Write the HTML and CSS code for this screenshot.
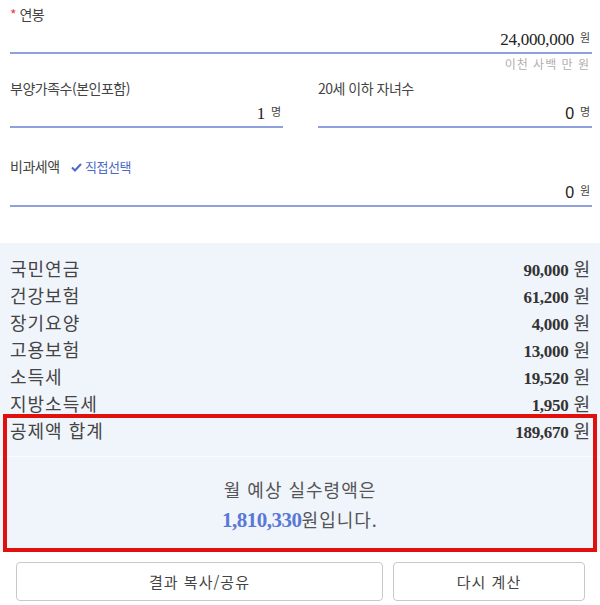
FILE: index.html
```html
<!DOCTYPE html>
<html lang="ko">
<head>
    <meta charset="UTF-8">
    <meta name="viewport" content="width=device-width, initial-scale=1.0">
    <title>연봉 실수령액 계산기</title>
    <link rel="stylesheet" href="styles.css">
</head>
<body>
    <div class="form">
        <!-- 연봉 입력 -->
        <div class="field">
            <div class="label"><span class="req">*</span> 연봉</div>
            <div class="input"><span class="num">24,000,000</span><span class="unit">원</span></div>
            <div class="hint">이천 사백 만 원</div>
        </div>

        <div class="field-row">
            <div class="field">
                <div class="label">부양가족수(본인포함)</div>
                <div class="input"><span class="num">1</span><span class="unit">명</span></div>
            </div>
            <div class="field">
                <div class="label">20세 이하 자녀수</div>
                <div class="input"><span class="num sans">0</span><span class="unit">명</span></div>
            </div>
        </div>

        <div class="field field-tax">
            <div class="label">비과세액
                <span class="pick">
                    <svg width="11" height="9" viewBox="0 0 11 9"><path d="M1 4.5 L4 7.5 L10 1" fill="none" stroke="#4b69c6" stroke-width="2"/></svg>
                    직접선택
                </span>
            </div>
            <div class="input"><span class="num sans">0</span><span class="unit">원</span></div>
        </div>
    </div>

    <!-- 공제 내역 -->
    <div class="result">
        <div class="rows">
            <div class="row"><span class="name">국민연금</span><span><b>90,000</b> 원</span></div>
            <div class="row"><span class="name">건강보험</span><span><b>61,200</b> 원</span></div>
            <div class="row"><span class="name">장기요양</span><span><b>4,000</b> 원</span></div>
            <div class="row"><span class="name">고용보험</span><span><b>13,000</b> 원</span></div>
            <div class="row"><span class="name">소득세</span><span><b>19,520</b> 원</span></div>
            <div class="row"><span class="name">지방소득세</span><span><b>1,950</b> 원</span></div>
        </div>
        <div class="summary">
            <div class="row total"><span class="name">공제액 합계</span><span><b>189,670</b> 원</span></div>
            <div class="net">
                <p>월 예상 실수령액은</p>
                <p><b class="net-num">1,810,330</b>원입니다.</p>
            </div>
        </div>
    </div>

    <div class="buttons">
        <button>결과 복사/공유</button>
        <button>다시 계산</button>
    </div>
</body>
</html>
```

FILE: styles.css
```css
body {
    margin: 0;
    width: 600px;
    font-family: "Noto Sans CJK KR", "Noto Sans", sans-serif;
    color: #444;
    background: #fff;
}
.form {
    padding: 4px 8px 0 10px;
}
.label {
    font-size: 14px;
    line-height: 20px;
    color: #444;
    letter-spacing: -0.5px;
}
.req {
    color: #e4473f;
}
.input {
    height: 28px;
    line-height: 26px;
    border-bottom: 2px solid #8fa1dd;
    text-align: right;
    padding-right: 2px;
}
.num {
    font-family: "Liberation Serif", serif;
    font-size: 17px;
    letter-spacing: -0.3px;
    color: #222;
}
.num.sans {
    font-family: "Liberation Sans", sans-serif;
    font-size: 16px;
}
.unit {
    font-size: 11px;
    margin-left: 6px;
    vertical-align: 3px;
}
.hint {
    font-size: 12px;
    line-height: 20px;
    text-align: right;
    color: #b0b0b0;
    letter-spacing: 1px;
    padding-right: 2px;
}
.field-row {
    display: grid;
    grid-template-columns: 273px 274px;
    gap: 35px;
    margin-top: 4px;
}
.field-tax {
    margin-top: 28px;
}
.pick {
    font-size: 13px;
    color: #4b69c6;
    margin-left: 8px;
}
.result {
    margin-top: 36px;
    background: #f0f4fb;
    padding-top: 12px;
}
.row {
    display: flex;
    justify-content: space-between;
    align-items: center;
    height: 27px;
    padding: 0 10px;
    font-size: 18px;
    line-height: 27px;
    color: #444;
}
.row span {
    height: 27px;
}
.row .name {
    letter-spacing: 1px;
}
.row b {
    font-family: "Liberation Serif", serif;
    font-size: 17px;
    color: #333;
    letter-spacing: -0.3px;
}
.summary {
    position: relative;
}
.summary::after {
    content: "";
    position: absolute;
    top: -3px;
    left: 3px;
    right: 3px;
    bottom: 0;
    border: 4px solid #e0100f;
}
.total {
    padding-bottom: 12px;
    border-bottom: 1px solid #f8faff;
}
.net {
    padding: 17px 0 18px;
    text-align: center;
    font-size: 18px;
    line-height: 30px;
    color: #555;
}
.net p {
    margin: 0;
    height: 30px;
    letter-spacing: 1px;
}
.net-num {
    font-family: "Liberation Serif", serif;
    font-size: 21px;
    color: #5a78d6;
    letter-spacing: -0.5px;
}
.buttons {
    display: grid;
    grid-template-columns: 1fr 192px;
    gap: 10px;
    padding: 10px 15px 0 16px;
}
button {
    height: 39px;
    background: #fff;
    border: 1px solid #c8c8c8;
    border-radius: 4px;
    font-family: inherit;
    font-size: 15px;
    color: #444;
    letter-spacing: 1px;
}
```
